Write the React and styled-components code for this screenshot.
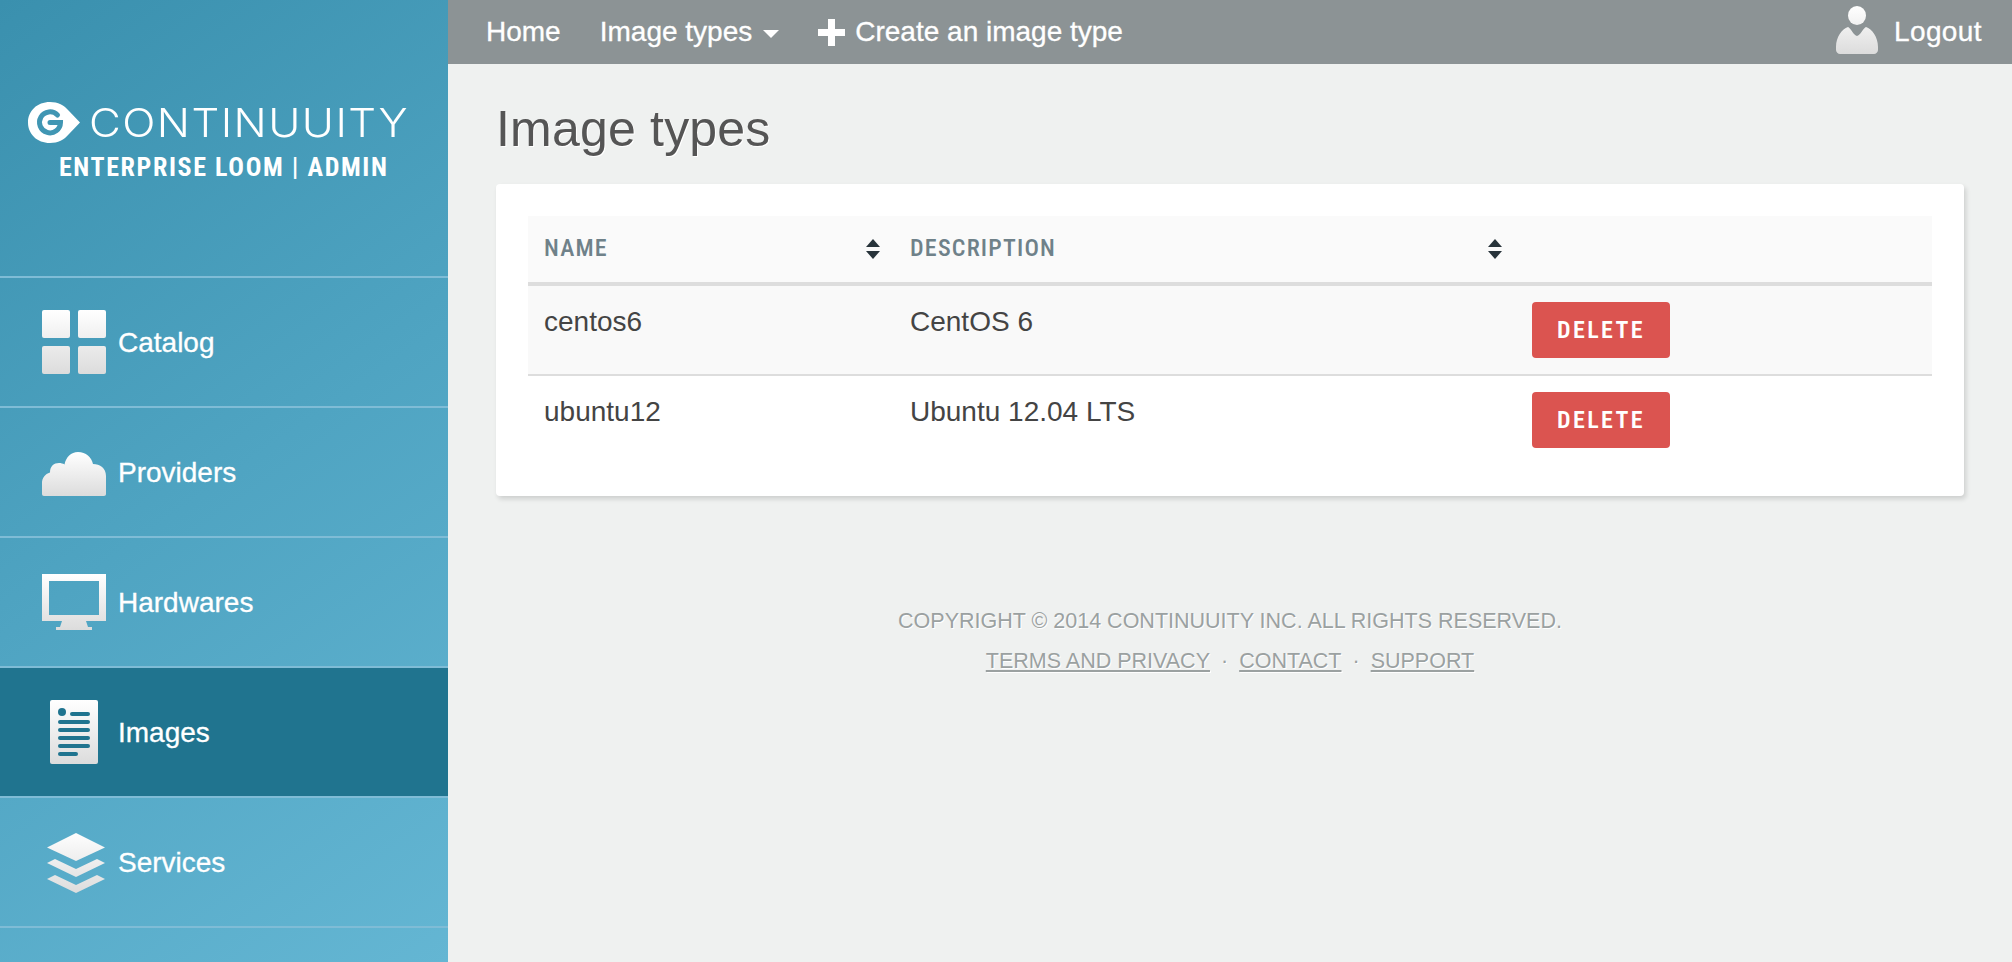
import React from 'react';
import styled, { createGlobalStyle } from 'styled-components';

const GlobalStyle = createGlobalStyle`
  html, body {
    margin: 0;
    padding: 0;
    height: 100%;
  }
  body {
    background: #eff1f0;
    font-family: 'Liberation Sans', Arial, sans-serif;
    color: #444;
  }
`;

const NARROW = `'Roboto', 'Liberation Sans', sans-serif`;

const Page = styled.div`
  display: flex;
  width: 2012px;
  height: 962px;
  overflow: hidden;
`;

const Sidebar = styled.aside`
  width: 448px;
  flex: none;
  display: flex;
  flex-direction: column;
  background: linear-gradient(145deg, #3a90ae 0%, #4fa4c2 50%, #64b6d3 100%);
`;

const Brand = styled.div`
  height: 278px;
  padding-top: 102px;
  box-sizing: border-box;
  color: #fff;
  border-bottom: 2px solid #7fbcd6;
`;

const BrandRow = styled.div`
  display: flex;
  align-items: center;
  padding-left: 28px;
  height: 41px;
`;

const BrandName = styled.span`
  display: inline-block;
  font-family: 'Inter', sans-serif;
  font-weight: 300;
  font-size: 39px;
  letter-spacing: 1.3px;
  line-height: 41px;
  margin-left: 9px;
  transform: scaleX(1.12);
  transform-origin: left center;
`;

const BrandSub = styled.div`
  font-family: ${NARROW};
  font-stretch: 75%;
  font-weight: 700;
  font-size: 26px;
  letter-spacing: 1.6px;
  line-height: 30px;
  margin-top: 9px;
  padding-left: 59px;
  white-space: nowrap;
`;

const SideItem = styled.a`
  display: flex;
  align-items: center;
  gap: 12px;
  height: 128px;
  padding-left: 42px;
  color: #fff;
  font-size: 28px;
  -webkit-text-stroke: 0.3px #fff;
  border-bottom: 2px solid #7fbcd6;
  background: ${props => (props.$active ? '#20748f' : 'transparent')};
`;

const SideLabel = styled.span`
  padding-top: 2px;
`;

const SideIcon = styled.svg`
  width: 64px;
  height: 64px;
  flex: none;
`;

const Main = styled.main`
  flex: 1;
  display: flex;
  flex-direction: column;
  min-width: 0;
`;

const TopBar = styled.nav`
  height: 64px;
  flex: none;
  display: flex;
  align-items: center;
  padding: 0 30px 0 38px;
  background: #8c9395;
  color: #fff;
  font-size: 28px;
  -webkit-text-stroke: 0.3px #fff;
`;

const TopLink = styled.a`
  display: flex;
  align-items: center;
  margin-right: 39px;
  color: #fff;
  white-space: nowrap;
`;

const Caret = styled.span`
  width: 0;
  height: 0;
  margin-left: 11px;
  margin-top: 4px;
  border-left: 8px solid transparent;
  border-right: 8px solid transparent;
  border-top: 8px solid #fff;
`;

const PlusIcon = styled.svg`
  width: 27px;
  height: 27px;
  margin-right: 10px;
`;

const UserBlock = styled.a`
  margin-left: auto;
  display: flex;
  align-items: center;
  gap: 16px;
  color: #fff;
  letter-spacing: 0.4px;
`;

const UserIcon = styled.svg`
  width: 42px;
  height: 48px;
  margin-top: -4px;
`;

const Heading = styled.h1`
  margin: 0;
  padding: 35px 48px 0;
  height: 120px;
  box-sizing: border-box;
  font-size: 50px;
  line-height: 60px;
  font-weight: 400;
  letter-spacing: 0.2px;
  color: #555;
  text-shadow: 1px 1px 0 #fff;
`;

const Card = styled.section`
  margin: 0 48px;
  padding: 32px;
  background: #fff;
  border-radius: 4px;
  box-shadow: 2px 3px 5px rgba(0, 0, 0, 0.14);
`;

const Table = styled.table`
  width: 1404px;
  border-collapse: collapse;
  table-layout: fixed;
`;

const Th = styled.th`
  width: ${props => props.$width}px;
  height: 68px;
  padding: 0 0 0 16px;
  box-sizing: border-box;
  background: #fafafa;
  border-bottom: 4px solid #dddddd;
  text-align: left;
  font-family: ${NARROW};
  font-stretch: 75%;
  font-weight: 500;
  font-size: 24px;
  letter-spacing: 1.2px;
  color: #6f8189;
`;

const HeadInner = styled.div`
  display: flex;
  align-items: center;
  justify-content: space-between;
  padding-right: 13px;
`;

const HeadLabel = styled.span`
  margin-top: -2px;
`;

const SortIcon = styled.svg`
  width: 16px;
  height: 20px;
  flex: none;
`;

const Tr = styled.tr`
  background: ${props => (props.$striped ? '#f9f9f9' : '#fff')};
  border-bottom: ${props => (props.$last ? 'none' : '2px solid #dddddd')};
`;

const Td = styled.td`
  padding: 16px;
  vertical-align: top;
  font-size: 28px;
  line-height: 40px;
  color: #444;
`;

const DeleteButton = styled.button`
  display: block;
  width: 138px;
  height: 56px;
  padding: 0;
  border: 0;
  border-radius: 4px;
  background: #db5450;
  color: #fff;
  font-family: ${NARROW};
  font-stretch: 75%;
  font-weight: 600;
  font-size: 24px;
  letter-spacing: 2.4px;
`;

const Footer = styled.footer`
  margin-top: 105px;
  text-align: center;
  font-size: 21.5px;
  line-height: 40px;
  color: #9ba1a1;
  text-shadow: 1px 1px 0 #fff;
`;

const FooterLink = styled.a`
  color: inherit;
  text-decoration: underline;
`;

const Dot = styled.span`
  margin: 0 11px;
`;

const IconDefs = () => (
  <svg width="0" height="0" style={{ position: 'absolute' }}>
    <defs>
      <linearGradient id="iconFill" x1="0" y1="0" x2="0" y2="1">
        <stop offset="0" stopColor="#ffffff" />
        <stop offset="1" stopColor="#dcdcdc" />
      </linearGradient>
      {/* spans a whole icon made of several shapes */}
      <linearGradient id="iconFillWide" gradientUnits="userSpaceOnUse" x1="0" y1="0" x2="0" y2="64">
        <stop offset="0" stopColor="#ffffff" />
        <stop offset="1" stopColor="#dcdcdc" />
      </linearGradient>
      <linearGradient id="userFill" gradientUnits="userSpaceOnUse" x1="0" y1="0" x2="0" y2="48">
        <stop offset="0" stopColor="#ffffff" />
        <stop offset="1" stopColor="#dcdcdc" />
      </linearGradient>
    </defs>
  </svg>
);

const LogoMark = () => (
  <svg width="52" height="41" viewBox="0 0 52 41">
    <path d="M22 0C30 0 36 3 41 9L52 20.500L41 32C36 38 30 41 22 41C9 41 0 32 0 20.500S9 0 22 0Z" fill="#fff" />
    <path
      d="M29.500 13A10.500 10.500 0 1 0 32.500 20.500L22 20.500"
      fill="none"
      stroke="#4096b3"
      strokeWidth="5"
      strokeLinecap="round"
    />
  </svg>
);

const CatalogIcon = () => (
  <SideIcon viewBox="0 0 64 64">
    <g fill="url(#iconFillWide)">
      <path d="M2 0H26A2 2 0 0 1 28 2V26A2 2 0 0 1 26 28H2A2 2 0 0 1 0 26V2A2 2 0 0 1 2 0Z" />
      <path d="M38 0H62A2 2 0 0 1 64 2V26A2 2 0 0 1 62 28H38A2 2 0 0 1 36 26V2A2 2 0 0 1 38 0Z" />
      <path d="M2 36H26A2 2 0 0 1 28 38V62A2 2 0 0 1 26 64H2A2 2 0 0 1 0 62V38A2 2 0 0 1 2 36Z" />
      <path d="M38 36H62A2 2 0 0 1 64 38V62A2 2 0 0 1 62 64H38A2 2 0 0 1 36 62V38A2 2 0 0 1 38 36Z" />
    </g>
  </SideIcon>
);

const CloudIcon = () => (
  <SideIcon viewBox="0 0 64 64">
    <path
      d="M2 56C.8 56 0 55.200 0 54V43C0 38 3 34 8 32.500C8 26 12 23 17 23C19 23 21 23.500 22.500 24.500C24 17 29 12 36 12C44 12 49.500 17 51 24C58 24 64 28 64 36V54C64 55.200 63.200 56 62 56Z"
      fill="url(#iconFill)"
    />
  </SideIcon>
);

const MonitorIcon = () => (
  <SideIcon viewBox="0 0 64 64">
    <path
      fillRule="evenodd"
      d="M0 4H64V51H44L46 57H50V60H14V57H18L20 51H0ZM7 11V45H57V11Z"
      fill="url(#iconFill)"
    />
  </SideIcon>
);

const ImagesIcon = () => (
  <SideIcon viewBox="0 0 64 64">
    <path d="M10 0H54A2 2 0 0 1 56 2V62A2 2 0 0 1 54 64H10A2 2 0 0 1 8 62V2A2 2 0 0 1 10 0Z" fill="url(#iconFill)" />
    <g fill="#20748f">
      <circle cx="20" cy="12" r="4" />
      <rect x="28" y="12" width="20" height="4" rx="2" />
      <rect x="16" y="20" width="32" height="4" rx="2" />
      <rect x="16" y="28" width="32" height="4" rx="2" />
      <rect x="16" y="36" width="32" height="4" rx="2" />
      <rect x="16" y="44" width="32" height="4" rx="2" />
      <rect x="16" y="52" width="20" height="4" rx="2" />
    </g>
  </SideIcon>
);

const LayersIcon = () => (
  <SideIcon viewBox="0 0 64 64">
    <g fill="url(#iconFillWide)">
      <path d="M34 3L63 17.500L34 31L5 17.500Z" />
      <path d="M13 29L34 39L55 29L63 33L34 47L5 33Z" />
      <path d="M13 45L34 55L55 45L63 49L34 63L5 49Z" />
    </g>
  </SideIcon>
);

const SortGlyph = () => (
  <SortIcon viewBox="0 0 16 20">
    <path d="M8 0L15 8H1ZM1 12H15L8 20Z" fill="#27333a" />
  </SortIcon>
);

const rows = [
  { name: 'centos6', description: 'CentOS 6' },
  { name: 'ubuntu12', description: 'Ubuntu 12.04 LTS' },
];

const navItems = [
  { label: 'Catalog', Icon: CatalogIcon },
  { label: 'Providers', Icon: CloudIcon },
  { label: 'Hardwares', Icon: MonitorIcon },
  { label: 'Images', Icon: ImagesIcon, active: true },
  { label: 'Services', Icon: LayersIcon },
];

const App = () => {
  return (
    <Page>
      <GlobalStyle />
      <IconDefs />
      <Sidebar>
        <Brand>
          <BrandRow>
            <LogoMark />
            <BrandName>CONTINUUITY</BrandName>
          </BrandRow>
          <BrandSub>ENTERPRISE LOOM | ADMIN</BrandSub>
        </Brand>
        {navItems.map(({ label, Icon, active }) => (
          <SideItem key={label} $active={active}>
            <Icon />
            <SideLabel>{label}</SideLabel>
          </SideItem>
        ))}
      </Sidebar>
      <Main>
        <TopBar>
          <TopLink>Home</TopLink>
          <TopLink>
            Image types
            <Caret />
          </TopLink>
          <TopLink>
            <PlusIcon viewBox="0 0 27 27">
              <path d="M10 0H17V10H27V17H17V27H10V17H0V10H10Z" fill="#fff" />
            </PlusIcon>
            Create an image type
          </TopLink>
          <UserBlock>
            <UserIcon viewBox="0 0 42 48">
              <ellipse cx="21" cy="9.500" rx="9" ry="9.500" fill="url(#userFill)" />
              <path
                d="M12 21C14 21 18 30 21 30C24 30 28 21 30 21C36 23 42 31 42 41V44C42 46 40 48 38 48H4C2 48 0 46 0 44V41C0 31 6 23 12 21Z"
                fill="url(#userFill)"
              />
            </UserIcon>
            Logout
          </UserBlock>
        </TopBar>
        <Heading>Image types</Heading>
        <Card>
          <Table>
            <thead>
              <tr>
                <Th $width={366}>
                  <HeadInner>
                    <HeadLabel>NAME</HeadLabel>
                    <SortGlyph />
                  </HeadInner>
                </Th>
                <Th $width={622}>
                  <HeadInner>
                    <HeadLabel>DESCRIPTION</HeadLabel>
                    <SortGlyph />
                  </HeadInner>
                </Th>
                <Th $width={416} />
              </tr>
            </thead>
            <tbody>
              {rows.map((row, i) => (
                <Tr key={row.name} $striped={i === 0} $last={i === rows.length - 1}>
                  <Td>{row.name}</Td>
                  <Td>{row.description}</Td>
                  <Td>
                    <DeleteButton>DELETE</DeleteButton>
                  </Td>
                </Tr>
              ))}
            </tbody>
          </Table>
        </Card>
        <Footer>
          <div>COPYRIGHT © 2014 CONTINUUITY INC. ALL RIGHTS RESERVED.</div>
          <div>
            <FooterLink>TERMS AND PRIVACY</FooterLink>
            <Dot>·</Dot>
            <FooterLink>CONTACT</FooterLink>
            <Dot>·</Dot>
            <FooterLink>SUPPORT</FooterLink>
          </div>
        </Footer>
      </Main>
    </Page>
  );
};

export default App;
